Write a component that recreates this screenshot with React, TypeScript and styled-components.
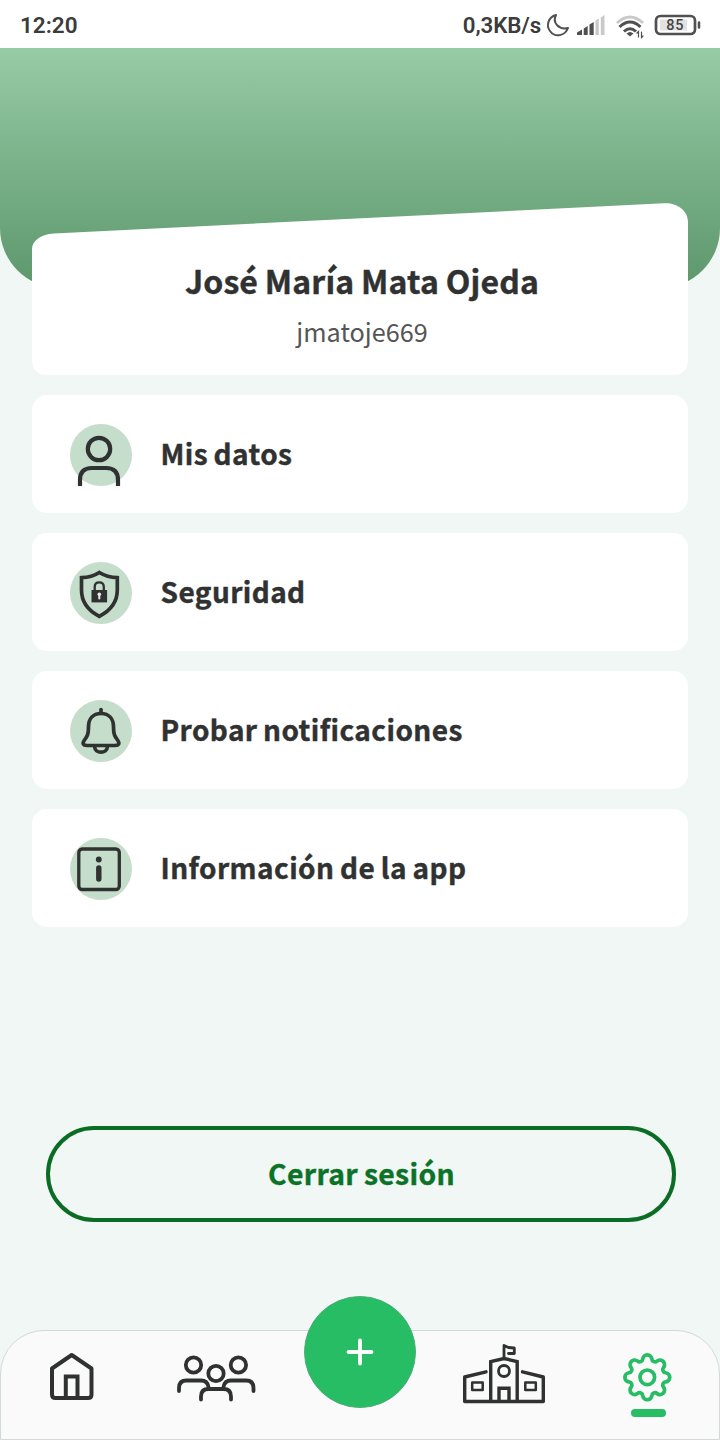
import React from "react";
import styled, { createGlobalStyle } from "styled-components";

const GlobalStyle = createGlobalStyle`
  *, *::before, *::after { box-sizing: border-box; }
  body { margin: 0; background: #f1f7f4; }
  button { font: inherit; }
  svg { display: block; flex: none; }
`;

const INK = "#303131";
const GREEN = "#26bd64";

const Screen = styled.div`
  width: 720px;
  height: 1440px;
  display: flex;
  flex-direction: column;
  overflow: hidden;
  background: #f1f7f4;
  color: ${INK};
  font-family: "Noto Sans CJK SC", "Noto Sans", sans-serif;
`;

const StatusBar = styled.header`
  height: 48px;
  flex: none;
  display: flex;
  justify-content: space-between;
  align-items: center;
  padding: 1px 18px 0 20px;
  background: #fff;
  color: #3c3c3c;
  font-family: Roboto, sans-serif;
  font-weight: 600;
`;

const Clock = styled.time`
  font-size: 22.500px;
`;

const StatusRight = styled.div`
  display: flex;
  align-items: center;
`;

const Speed = styled.span`
  font-size: 22.300px;
  letter-spacing: -0.1px;
`;

const Banner = styled.div`
  height: 240px;
  flex: none;
  border-radius: 0 0 60px 60px;
  background: linear-gradient(#97cba6, #5d976c);
`;

const Content = styled.main`
  display: flex;
  flex-direction: column;
  gap: 20px;
  margin: -85px 32px 0;
`;

const ProfileCard = styled.section`
  height: 172px;
  padding-top: 53px;
  display: flex;
  flex-direction: column;
  align-items: center;
  background: #fff;
  clip-path: path("M0 46C0 38 9 31 22 30.5L632 0.3C646 -0.3 656 8 656 19V156Q656 172 640 172H16Q0 172 0 156Z");
`;

const Name = styled.h1`
  margin: 0 0 0 4px;
  font-size: 32px;
  line-height: 48px;
  font-weight: 700;
  letter-spacing: 0.150px;
  word-spacing: -0.700px;
  -webkit-text-stroke: 0.400px currentColor;
  white-space: nowrap;
`;

const Username = styled.p`
  margin: 8px 0 0 4px;
  font-size: 25.200px;
  line-height: 38px;
  color: #555;
`;

const MenuRow = styled.button`
  height: 118px;
  display: flex;
  align-items: center;
  gap: 28px;
  padding: 2px 38px 0;
  border: 0;
  border-radius: 15px;
  background: #fff;
  color: inherit;
  text-align: left;
`;

const IconDisc = styled.span`
  width: 62px;
  height: 62px;
  flex: none;
  border-radius: 50%;
  background: #c5ddcb;
`;

const MenuLabel = styled.span`
  margin: 0 0 4px 0.500px;
  font-size: 28px;
  line-height: 44px;
  font-weight: 700;
  letter-spacing: 0.420px;
  word-spacing: -1.200px;
  -webkit-text-stroke: 0.400px currentColor;
  white-space: nowrap;
`;

const LogoutButton = styled.button`
  width: 630px;
  height: 96px;
  flex: none;
  margin: 199px 0 0 46px;
  padding: 0 0 3px 1px;
  border: 4px solid #0b6d25;
  border-radius: 48px;
  background: transparent;
  color: #0b7227;
  font-size: 28.300px;
  font-weight: 700;
  line-height: 44px;
  letter-spacing: 0.350px;
  word-spacing: -0.800px;
  -webkit-text-stroke: 0.400px currentColor;
`;

const NavBar = styled.nav`
  height: 110px;
  flex: none;
  margin-top: auto;
  display: grid;
  grid-template-columns: repeat(5, 1fr);
  border: 1px solid #d3dad6;
  border-radius: 44px 44px 0 0;
  background: #fafafa;
`;

const NavItem = styled.a`
  display: flex;
  flex-direction: column;
  align-items: center;
  padding-top: 9px;
`;

const AddButton = styled.button`
  width: 112px;
  height: 112px;
  margin: -35px auto 0;
  display: grid;
  place-items: center;
  padding: 0;
  border: 1px solid #4fac77;
  border-radius: 50%;
  background: ${GREEN};
`;

const ActiveMark = styled.span`
  width: 35px;
  height: 8px;
  margin: -3px 0 0 2px;
  border-radius: 4px;
  background: ${GREEN};
`;

const line = {
  fill: "none",
  stroke: INK,
  strokeLinecap: "round" as const,
  strokeLinejoin: "round" as const,
};

const UserIcon = () => (
  <svg width="62" height="62" viewBox="70 424 62 62" overflow="visible" {...line} strokeWidth="4.2">
    <circle cx="99" cy="449" r="11.2" />
    <path d="M80 486V480Q80 468 92 468H106Q118 468 118 480V486" strokeLinecap="butt" />
  </svg>
);

const ShieldIcon = () => (
  <svg width="62" height="62" viewBox="70 562 62 62" {...line} strokeWidth="3.700">
    <path d="M99.300 572.500C94 576 87 577.500 81.500 577.700V590C81.500 602 89 611 99.300 616.300C109.600 611 117.300 602 117.300 590V577.700C111.600 577.500 105 576 99.300 572.500Z" strokeLinejoin="miter" />
    <path d="M94.700 591V587Q94.700 582.400 99.200 582.400Q103.800 582.400 103.800 587V591" strokeWidth="2.3" />
    <rect x="91.500" y="590" width="15.600" height="12.400" fill={INK} stroke="none" />
    <path d="M99.300 594.500V598.500" stroke="#e5eee7" strokeWidth="2" />
    <circle cx="99.300" cy="594.300" r="1.800" fill="#e5eee7" stroke="none" />
  </svg>
);

const BellIcon = () => (
  <svg width="62" height="62" viewBox="70 700 62 62" {...line} strokeWidth="3.700">
    <path d="M101 709.500V713" />
    <path d="M101 713.500C93 713.500 88.500 719 88.500 727C88.500 734 87.500 736 84.500 740C82 743.500 83 745.500 87 745.500H115C119 745.500 120 743.500 117.500 740C114.500 736 113.500 734 113.500 727C113.500 719 109 713.500 101 713.500Z" />
    <path d="M94.500 746.500C95 754 107 754 107.500 746.500" />
  </svg>
);

const InfoIcon = () => (
  <svg width="62" height="62" viewBox="70 838 62 62" {...line} strokeWidth="3.300">
    <rect x="78.800" y="849" width="40.500" height="40.500" rx="3.500" />
    <circle cx="98.800" cy="859.500" r="2.900" fill={INK} stroke="none" />
    <path d="M98.800 868V879" strokeWidth="5.400" />
  </svg>
);

const HomeIcon = () => (
  <svg width="84" height="72" viewBox="31 1340 84 72" {...line} strokeWidth="4">
    <path d="M71.700 1355L91.500 1368.500V1394.500Q91.500 1398 88 1398H55.500Q52 1398 52 1394.500V1368.500Z" />
    <path d="M65.800 1398V1376.500H77.500V1398" strokeLinejoin="miter" />
  </svg>
);

const GroupIcon = () => (
  <svg width="84" height="72" viewBox="174 1340 84 72" {...line} strokeWidth="3.800">
    <circle cx="193.500" cy="1365" r="7.700" />
    <circle cx="238.400" cy="1365" r="7.700" />
    <circle cx="216" cy="1373.500" r="7.700" />
    <path d="M179 1391V1388Q179 1380.500 186.500 1380.500H201Q207.500 1380.500 208.500 1387" />
    <path d="M253.500 1391V1388Q253.500 1380.500 246 1380.500H231Q224.500 1380.500 223.500 1387" />
    <path d="M201 1399.500V1396.500Q201 1389 208.500 1389H223.500Q231 1389 231 1396.500V1399.500" />
  </svg>
);

const SchoolIcon = () => (
  <svg width="84" height="72" viewBox="462 1340 84 72" {...line} strokeWidth="3.400">
    <path d="M486 1371.800L464.700 1377V1401.500H543.300V1377L522.500 1371.800" />
    <path d="M490.700 1401V1361.500L504 1358.500L517.200 1361.500V1401" strokeLinejoin="miter" />
    <path d="M504 1358V1345.500L508.500 1347.500L514.300 1348V1353.500H508.500" strokeWidth="2.800" />
    <circle cx="504" cy="1371" r="5.500" strokeWidth="2.800" />
    <path d="M499 1401V1388.300H509V1401" strokeLinejoin="miter" />
    <rect x="472.200" y="1382.500" width="10.500" height="7.500" strokeWidth="2.500" />
    <rect x="525.300" y="1382.500" width="10.500" height="7.500" strokeWidth="2.500" />
  </svg>
);

// Outline of an eight-lobed gear: outer arcs joined by tangent inner arcs.
const gearPath = (() => {
  const lobe = 4.6;
  const valley = 3.1;
  const ring = 17.9;
  const half = Math.PI / 8;
  const side = ring * Math.sin(half);
  const out = ring * Math.cos(half) + Math.sqrt((lobe + valley) ** 2 - side ** 2);
  const t = lobe / (lobe + valley);
  const tangent = (lobeAngle: number, valleyAngle: number) => {
    const x = ring * Math.cos(lobeAngle) * (1 - t) + out * Math.cos(valleyAngle) * t;
    const y = ring * Math.sin(lobeAngle) * (1 - t) + out * Math.sin(valleyAngle) * t;
    return `${x.toFixed(2)} ${y.toFixed(2)}`;
  };
  let d = `M${tangent(0, -half)}`;
  for (let i = 0; i < 8; i++) {
    const a = i * 2 * half;
    d += `A${lobe} ${lobe} 0 0 1 ${tangent(a, a + half)}`;
    d += `A${valley} ${valley} 0 0 0 ${tangent(a + 2 * half, a + half)}`;
  }
  return `${d}Z`;
})();

const GearIcon = () => (
  <svg width="84" height="72" viewBox="-42.300 -37.300 84 72" {...line} stroke={GREEN} strokeWidth="3.700">
    <path d={gearPath} />
    <circle r="7.300" />
  </svg>
);

const PlusIcon = () => (
  <svg width="30" height="30" viewBox="0 0 30 30" {...line} stroke="#fff" strokeWidth="3.800">
    <path d="M15 3.500V26.500M3.500 15H26.500" />
  </svg>
);

const StatusIcons = () => (
  <svg width="161" height="34" viewBox="541 7 161 34" fill="none" stroke="#505050" strokeLinecap="round">
    <path d="M556 14C548 16 546 25 550 30C555 37 565 35 568 27C559 29 552 22 556 14Z" strokeWidth="2" strokeLinejoin="round" />
    <g fill="#505050" stroke="none">
      <path d="M577 34V31.500L582 28.500V34ZM583.700 34V27.500L587.700 25V34ZM589.500 34V23.500L593.700 21V34Z" />
      <path d="M595.500 34V19.500L598.800 17.500V34ZM600.800 34V16.500L604.500 14V34Z" fill="#c9c9c9" />
    </g>
    <g strokeLinecap="butt" strokeWidth="3">
      <path d="M617 22Q630 10 643 22" stroke="#c9c9c9" />
      <path d="M619.500 26Q630 16 640.500 26M624 30.500Q630 25 636 30.500" />
    </g>
    <path d="M626.500 32.500Q630 29.500 633.500 32.500L630 35.500Z" fill="#505050" stroke="none" />
    <path d="M638.500 36V30.500L637 32M641.500 31V36.500L643 35" strokeWidth="1.200" />
    <rect x="656" y="15" width="39" height="18" rx="4.500" strokeWidth="2.700" />
    <rect x="660" y="18.500" width="27" height="11" fill="#e2e2e2" stroke="none" />
    <path d="M699 21.500V26.500" strokeWidth="2.500" />
    <text x="675.300" y="29.100" textAnchor="middle" fill="#444" stroke="none" fontFamily="Roboto, sans-serif" fontSize="14.500" fontWeight="500" letterSpacing="0.800">85</text>
  </svg>
);

const menu = [
  { label: "Mis datos", Icon: UserIcon },
  { label: "Seguridad", Icon: ShieldIcon },
  { label: "Probar notificaciones", Icon: BellIcon },
  { label: "Información de la app", Icon: InfoIcon },
];

export default function App() {
  return (
    <Screen>
      <GlobalStyle />
      <StatusBar>
        <Clock>12:20</Clock>
        <StatusRight>
          <Speed>0,3KB/s</Speed>
          <StatusIcons />
        </StatusRight>
      </StatusBar>
      <Banner />
      <Content>
        <ProfileCard>
          <Name>José María Mata Ojeda</Name>
          <Username>jmatoje669</Username>
        </ProfileCard>
        {menu.map(({ label, Icon }) => (
          <MenuRow key={label}>
            <IconDisc>
              <Icon />
            </IconDisc>
            <MenuLabel>{label}</MenuLabel>
          </MenuRow>
        ))}
      </Content>
      <LogoutButton>Cerrar sesión</LogoutButton>
      <NavBar>
        <NavItem>
          <HomeIcon />
        </NavItem>
        <NavItem>
          <GroupIcon />
        </NavItem>
        <AddButton aria-label="Añadir">
          <PlusIcon />
        </AddButton>
        <NavItem>
          <SchoolIcon />
        </NavItem>
        <NavItem>
          <GearIcon />
          <ActiveMark />
        </NavItem>
      </NavBar>
    </Screen>
  );
}
